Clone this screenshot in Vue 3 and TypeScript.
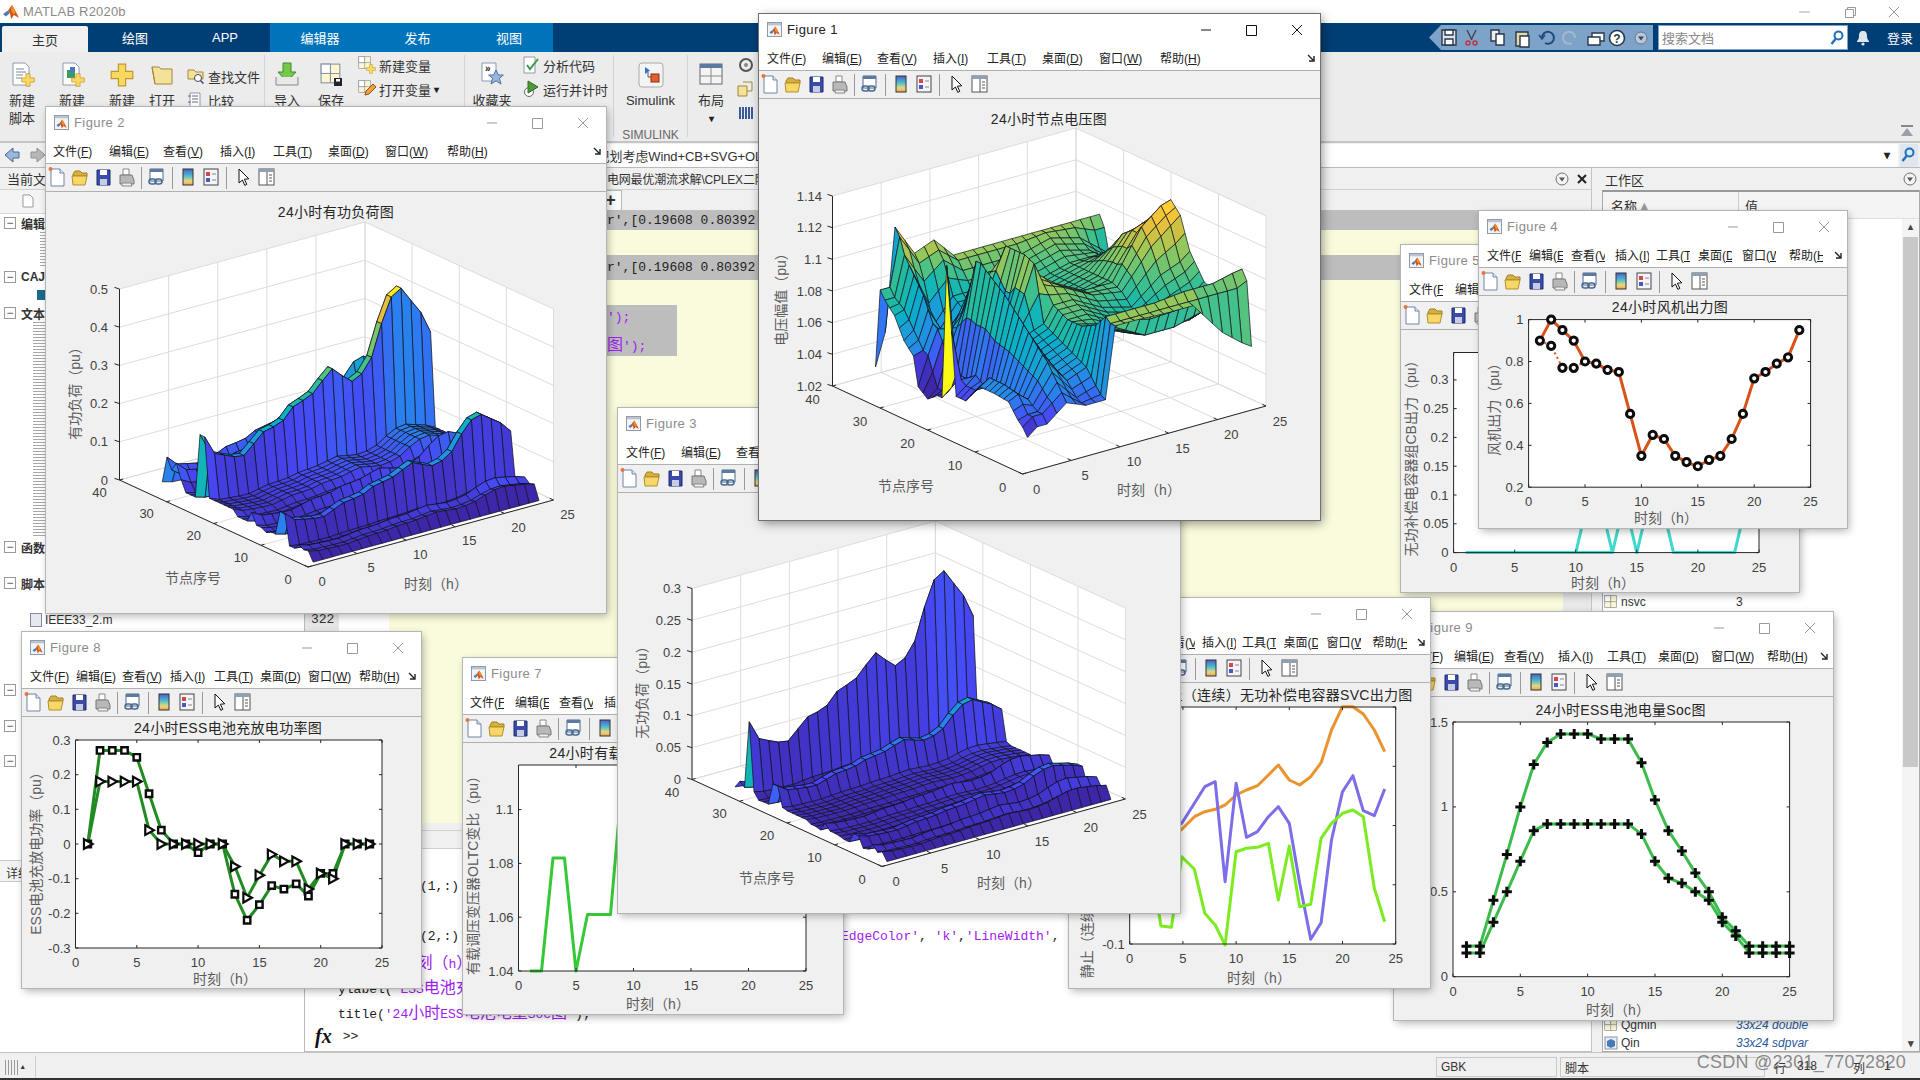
<script setup lang="ts">
type Pt = [number, number]
interface Txt { x: number; y: number; s: string; a: string; c: string; r?: boolean }
interface Shape { d: string; fill: string; stroke: string; w: number; dash?: string }
interface Layers { walls: Shape[]; grid: Shape[]; cells: Shape[]; lines: Shape[]; marks: Shape[]; texts: Txt[] }

const PAR: [number, number, number][] = [
  [62, 38, 168], [71, 72, 245], [44, 125, 240], [28, 155, 218], [8, 176, 200], [32, 186, 162],
  [90, 196, 124], [160, 200, 84], [222, 190, 62], [252, 200, 56], [249, 251, 21]
]
function parula(v: number): string {
  const u = Math.max(0, Math.min(0.9999, v)) * 10
  const i = Math.floor(u)
  const f = u - i
  const a = PAR[i]
  const b = PAR[i + 1]
  return `rgb(${Math.round(a[0] + (b[0] - a[0]) * f)},${Math.round(a[1] + (b[1] - a[1]) * f)},${Math.round(a[2] + (b[2] - a[2]) * f)})`
}
const pts = (p: Pt[]): string => p.map(q => `${q[0].toFixed(1)},${q[1].toFixed(1)}`).join(' ')
const ln = (p: Pt[], stroke: string, w: number, dash?: string): Shape => ({ d: pts(p), fill: 'none', stroke, w, dash })

interface Cfg3D {
  o: Pt; t: Pt; n: Pt; h: number; zlo: number; zhi: number; zt: number[]; zl: string[]; zx: number
  nOff: Pt; tOff: Pt; cmin: number; cmax: number; title: Pt; titleS: string; nl: Pt; tl: Pt; yl: Pt; ylS: string
  z: (n: number, t: number) => number
  colorV?: (n: number, t: number) => number
}
function build3D(c: Cfg3D): Layers {
  const P = (t: number, n: number, z: number): Pt => {
    const f = (z - c.zlo) / (c.zhi - c.zlo)
    return [
      c.o[0] + (t / 25) * (c.t[0] - c.o[0]) + (n / 40) * (c.n[0] - c.o[0]),
      c.o[1] + (t / 25) * (c.t[1] - c.o[1]) + (n / 40) * (c.n[1] - c.o[1]) - f * c.h
    ]
  }
  const white = (p: Pt[]): Shape => ({ d: pts(p), fill: '#fff', stroke: 'none', w: 0 })
  const { zlo: lo, zhi: hi } = c
  const walls = [
    white([P(0, 0, lo), P(25, 0, lo), P(25, 40, lo), P(0, 40, lo)]),
    white([P(0, 40, lo), P(25, 40, lo), P(25, 40, hi), P(0, 40, hi)]),
    white([P(25, 0, lo), P(25, 40, lo), P(25, 40, hi), P(25, 0, hi)])
  ]
  const G = '#dcdcdc'
  const grid: Shape[] = []
  const lines: Shape[] = []
  const texts: Txt[] = []
  const A = '#262626'
  for (const t of [0, 5, 10, 15, 20, 25]) {
    grid.push(ln([P(t, 0, lo), P(t, 40, lo), P(t, 40, hi)], G, 1))
    const a = P(t, 0, lo)
    lines.push(ln([a, [a[0] - 3.6, a[1] - 1.7]], A, 1))
    texts.push({ x: a[0] + c.tOff[0], y: a[1] + c.tOff[1], s: String(t), a: 'middle', c: 'tick' })
  }
  for (const n of [0, 10, 20, 30, 40]) {
    grid.push(ln([P(0, n, lo), P(25, n, lo), P(25, n, hi)], G, 1))
    const a = P(0, n, lo)
    lines.push(ln([a, [a[0] + 3.6, a[1] - 1]], A, 1))
    texts.push({ x: a[0] + c.nOff[0], y: a[1] + c.nOff[1], s: String(n), a: 'middle', c: 'tick' })
  }
  c.zt.forEach((z, i) => {
    grid.push(ln([P(0, 40, z), P(25, 40, z), P(25, 0, z)], G, 1))
    const a = P(0, 40, z)
    lines.push(ln([a, [a[0] - 5, a[1] - 1.6]], A, 1))
    texts.push({ x: c.zx, y: a[1], s: c.zl[i], a: 'end', c: 'tick' })
  })
  lines.push(ln([P(0, 40, hi), P(0, 40, lo), P(0, 0, lo), P(25, 0, lo)], A, 1))
  const cells: Shape[] = []
  for (let n = 32; n >= 1; n--) {
    for (let t = 23; t >= 1; t--) {
      const p = [P(t, n, c.z(n, t)), P(t + 1, n, c.z(n, t + 1)), P(t + 1, n + 1, c.z(n + 1, t + 1)), P(t, n + 1, c.z(n + 1, t))]
      const v = c.colorV ? c.colorV(n, t) : (c.z(n, t) - c.cmin) / (c.cmax - c.cmin)
      cells.push({ d: pts(p), fill: parula(v), stroke: '#10101a', w: 0.7 })
    }
  }
  texts.push({ x: c.title[0], y: c.title[1], s: c.titleS, a: 'middle', c: 'ttl' })
  texts.push({ x: c.nl[0], y: c.nl[1], s: '节点序号', a: 'middle', c: 'lab' })
  texts.push({ x: c.tl[0], y: c.tl[1], s: '时刻（h）', a: 'middle', c: 'lab' })
  texts.push({ x: c.yl[0], y: c.yl[1], s: c.ylS, a: 'middle', c: 'lab', r: true })
  return { walls, grid, cells, lines, marks: [], texts }
}

interface Cfg2D {
  x0: number; x1: number; y0: number; y1: number; ymin: number; ymax: number; yt: number[]; yl: string[]
  title: Pt; titleS: string; xl: Pt; yL: Pt; ylS: string; series: Shape[]; marks: Shape[]
}
function build2D(c: Cfg2D): Layers {
  const A = '#262626'
  const lines: Shape[] = [ln([[c.x0, c.y1], [c.x1, c.y1], [c.x1, c.y0], [c.x0, c.y0], [c.x0, c.y1]], A, 1)]
  const texts: Txt[] = []
  for (const t of [0, 5, 10, 15, 20, 25]) {
    const x = c.x0 + (t / 25) * (c.x1 - c.x0)
    lines.push(ln([[x, c.y0], [x, c.y0 - 3]], A, 1), ln([[x, c.y1], [x, c.y1 + 3]], A, 1))
    texts.push({ x, y: c.y0 + 14.5, s: String(t), a: 'middle', c: 'tick' })
  }
  c.yt.forEach((v, i) => {
    const y = c.y0 - ((v - c.ymin) / (c.ymax - c.ymin)) * (c.y0 - c.y1)
    lines.push(ln([[c.x0, y], [c.x0 + 3, y]], A, 1), ln([[c.x1, y], [c.x1 - 3, y]], A, 1))
    texts.push({ x: c.x0 - 5, y, s: c.yl[i], a: 'end', c: 'tick' })
  })
  texts.push({ x: c.title[0], y: c.title[1], s: c.titleS, a: 'middle', c: 'ttl' })
  texts.push({ x: c.xl[0], y: c.xl[1], s: '时刻（h）', a: 'middle', c: 'lab' })
  texts.push({ x: c.yL[0], y: c.yL[1], s: c.ylS, a: 'middle', c: 'lab', r: true })
  const walls: Shape[] = [{ d: pts([[c.x0, c.y1], [c.x1, c.y1], [c.x1, c.y0], [c.x0, c.y0]]), fill: '#fff', stroke: 'none', w: 0 }]
  return { walls, grid: [], cells: [], lines: [...c.series, ...lines], marks: c.marks, texts }
}

const Pload = [0, 50, 45, 60, 30, 30, 200, 200, 60, 60, 45, 60, 60, 120, 60, 60, 60, 90, 90, 90, 90, 90, 90, 420, 420, 60, 60, 60, 120, 200, 150, 210, 60]
const Qload = [0, 60, 40, 80, 30, 20, 100, 100, 20, 20, 30, 35, 35, 80, 10, 20, 20, 40, 40, 40, 40, 40, 50, 200, 200, 25, 25, 20, 70, 600, 70, 100, 40]
const Gt = [0.197, 0.147, 0.135, 0.124, 0.12, 0.144, 0.168, 0.174, 0.184, 0.212, 0.222, 0.233, 0.26, 0.284, 0.259, 0.237, 0.25, 0.286, 0.367, 0.43, 0.446, 0.407, 0.369, 0.31]

const VN = [1, 2, 3, 5, 8, 11, 14, 16, 18, 19, 20, 22, 24, 25, 27, 29, 31, 32, 33]
const VT = [1, 2, 3, 5, 7, 9, 10, 12, 15, 18, 21, 23, 24]
const VZ: number[][] = [
  [1.04, 1.045, 1.048, 1.057, 1.058, 1.058, 1.045, 1.045, 1.125, 1.04, 1.04, 1.035, 1.04, 1.058, 1.065, 1.078, 1.085, 1.09, 1.04],
  [1.045, 1.05, 1.05, 1.06, 1.062, 1.062, 1.05, 1.05, 1.055, 1.045, 1.04, 1.04, 1.058, 1.06, 1.07, 1.08, 1.085, 1.09, 1.06],
  [1.045, 1.05, 1.05, 1.055, 1.055, 1.055, 1.05, 1.055, 1.05, 1.05, 1.05, 1.06, 1.073, 1.075, 1.09, 1.1, 1.11, 1.12, 1.125],
  [1.055, 1.06, 1.065, 1.075, 1.085, 1.095, 1.105, 1.11, 1.115, 1.118, 1.118, 1.09, 1.07, 1.06, 1.06, 1.065, 1.09, 1.1, 1.105],
  [1.05, 1.05, 1.052, 1.06, 1.065, 1.07, 1.075, 1.08, 1.08, 1.07, 1.07, 1.09, 1.1, 1.095, 1.075, 1.08, 1.1, 1.105, 1.11],
  [1.05, 1.052, 1.056, 1.065, 1.07, 1.075, 1.08, 1.115, 1.118, 1.118, 1.118, 1.118, 1.1, 1.08, 1.075, 1.08, 1.09, 1.095, 1.097],
  [1.095, 1.095, 1.098, 1.09, 1.085, 1.085, 1.09, 1.1, 1.105, 1.1, 1.1, 1.1, 1.09, 1.08, 1.075, 1.08, 1.09, 1.095, 1.097],
  [1.095, 1.095, 1.098, 1.085, 1.08, 1.085, 1.09, 1.095, 1.095, 1.09, 1.09, 1.09, 1.085, 1.08, 1.078, 1.082, 1.09, 1.095, 1.097],
  [1.094, 1.095, 1.098, 1.075, 1.072, 1.075, 1.08, 1.085, 1.085, 1.08, 1.08, 1.08, 1.08, 1.08, 1.08, 1.085, 1.09, 1.095, 1.097],
  [1.094, 1.095, 1.1, 1.075, 1.07, 1.07, 1.075, 1.082, 1.085, 1.085, 1.085, 1.085, 1.085, 1.085, 1.085, 1.09, 1.095, 1.097, 1.097],
  [1.072, 1.095, 1.1, 1.08, 1.07, 1.075, 1.09, 1.105, 1.115, 1.11, 1.11, 1.105, 1.095, 1.09, 1.085, 1.085, 1.09, 1.095, 1.097],
  [1.062, 1.095, 1.103, 1.085, 1.075, 1.08, 1.095, 1.115, 1.125, 1.12, 1.115, 1.105, 1.095, 1.085, 1.075, 1.075, 1.08, 1.09, 1.097],
  [1.058, 1.098, 1.104, 1.09, 1.08, 1.085, 1.1, 1.12, 1.127, 1.12, 1.11, 1.1, 1.09, 1.08, 1.07, 1.07, 1.075, 1.09, 1.097]
]
function seg(a: number[], v: number): [number, number] {
  let i = 0
  while (i < a.length - 2 && a[i + 1] <= v) i++
  return [i, (v - a[i]) / (a[i + 1] - a[i])]
}
function vz(n: number, t: number): number {
  const [i, fi] = seg(VT, t)
  const [j, fj] = seg(VN, n)
  const a = VZ[i][j] + (VZ[i][j + 1] - VZ[i][j]) * fj
  const b = VZ[i + 1][j] + (VZ[i + 1][j + 1] - VZ[i + 1][j]) * fj
  return a + (b - a) * fi
}
function vColor(n: number, t: number): number {
  if (n === 18 && t === 1) return 1
  const c = [vz(n, t), vz(n + 1, t), vz(n, t + 1), vz(n + 1, t + 1)]
  if (t >= 19 && n <= 2) return (Math.max(...c) - 1.02) / 0.11 - 0.12
  const x = 0.75 * Math.min(...c) + 0.25 * vz(n, t)
  return t >= 9 ? (x - 1.02) / 0.11 : (x - 1.035) / 0.095
}

const plot1 = build3D({
  o: [1022.5, 474], t: [1266, 406], n: [832.5, 386], h: 190, zlo: 1.02, zhi: 1.14,
  zt: [1.02, 1.04, 1.06, 1.08, 1.1, 1.12, 1.14], zl: ['1.02', '1.04', '1.06', '1.08', '1.1', '1.12', '1.14'], zx: 822,
  nOff: [-20, 13], tOff: [14, 15], cmin: 1.03, cmax: 1.126, title: [1049, 119], titleS: '24小时节点电压图',
  nl: [906, 486], tl: [1149, 490], yl: [781, 296], ylS: '电压幅值（pu）', z: vz, colorV: vColor
})
const plot2 = build3D({
  o: [308, 567], t: [553.5, 500], n: [119.5, 480], h: 191, zlo: 0, zhi: 0.5,
  zt: [0, 0.1, 0.2, 0.3, 0.4, 0.5], zl: ['0', '0.1', '0.2', '0.3', '0.4', '0.5'], zx: 108,
  nOff: [-20, 12], tOff: [14, 14], cmin: 0, cmax: 0.446, title: [336, 212], titleS: '24小时有功负荷图',
  nl: [193, 578], tl: [436, 584], yl: [75, 390], ylS: '有功负荷（pu）',
  z: (n, t) => (Pload[n - 1] / 1000) * 2.38 * Gt[t - 1]
})
const plot3 = build3D({
  o: [882, 866.5], t: [1125.4, 799], n: [692, 779.5], h: 191, zlo: 0, zhi: 0.3,
  zt: [0, 0.05, 0.1, 0.15, 0.2, 0.25, 0.3], zl: ['0', '0.05', '0.1', '0.15', '0.2', '0.25', '0.3'], zx: 681,
  nOff: [-20, 12.5], tOff: [14, 15], cmin: 0, cmax: 0.273, title: [900, 504], titleS: '24小时无功负荷图',
  nl: [767, 878], tl: [1009, 883], yl: [642, 689], ylS: '无功负荷（pu）',
  z: (n, t) => (Qload[n - 1] / 1000) * 1.02 * Gt[t - 1]
})

const mapper = (x0: number, x1: number, y0: number, y1: number, ymin: number, ymax: number) => (t: number, v: number): Pt => [
  x0 + (t / 25) * (x1 - x0),
  y0 - ((v - ymin) / (ymax - ymin)) * (y0 - y1)
]
const circle = (p: Pt): Shape => ({
  d: `M${p[0] - 3.6} ${p[1]}a3.6 3.6 0 1 0 7.2 0a3.6 3.6 0 1 0 -7.2 0Z`, fill: '#fff', stroke: '#0c0c0c', w: 3
})
const square = (p: Pt): Shape => ({
  d: `M${p[0] - 3.2} ${p[1] - 3.2}h6.4v6.4h-6.4Z`, fill: '#fff', stroke: '#0c0c0c', w: 2.4
})
const tri = (p: Pt): Shape => ({
  d: `M${p[0] - 3.8} ${p[1] - 4.8}L${p[0] + 4.8} ${p[1]}L${p[0] - 3.8} ${p[1] + 4.8}Z`, fill: '#fff', stroke: '#0c0c0c', w: 2.2
})
const plus = (p: Pt): Shape => ({
  d: `M${p[0] - 5} ${p[1]}h10M${p[0]} ${p[1] - 5}v10`, fill: 'none', stroke: '#0c0c0c', w: 3
})

const m4 = mapper(1528.6, 1810.6, 487.2, 319.6, 0.2, 1)
const w4a = [0.9, 1, 0.95, 0.9, 0.8, 0.79, 0.76, 0.75, 0.55, 0.35, 0.45, 0.43, 0.35, 0.32, 0.3, 0.33, 0.35, 0.43, 0.55, 0.72, 0.75, 0.79, 0.82, 0.95]
const w4b: Pt[] = [[1, 0.9], [2, 0.875], [3, 0.77], [4, 0.77], [5, 0.8]]
const plot4 = build2D({
  x0: 1528.6, x1: 1810.6, y0: 487.2, y1: 319.6, ymin: 0.2, ymax: 1, yt: [0.2, 0.4, 0.6, 0.8, 1], yl: ['0.2', '0.4', '0.6', '0.8', '1'],
  title: [1670, 307], titleS: '24小时风机出力图', xl: [1666, 518], yL: [1494, 406], ylS: '风机出力（pu）',
  series: [
    ln(w4b.map(p => m4(p[0], p[1])), '#d95319', 2, '2 3'),
    ln(w4a.map((v, i) => m4(i + 1, v)), '#d95319', 3)
  ],
  marks: [...w4a.map((v, i) => circle(m4(i + 1, v))), ...w4b.slice(1, 4).map(p => circle(m4(p[0], p[1])))]
})

const m5 = mapper(1453.6, 1759, 552.6, 352.5, 0, 0.3475)
const flat5: Pt[] = [[1, 0], [13, 0]]
const osc5: Pt[] = [[10, 0], [11, 0.09], [12, 0.09], [13, 0], [14, 0.09], [15, 0], [16, 0.09], [17, 0.09], [18, 0], [23, 0], [24, 0.09]]
const plot5 = build2D({
  x0: 1453.6, x1: 1759, y0: 552.6, y1: 352.5, ymin: 0, ymax: 0.3475, yt: [0, 0.05, 0.1, 0.15, 0.2, 0.25, 0.3], yl: ['0', '0.05', '0.1', '0.15', '0.2', '0.25', '0.3'],
  title: [1606, 340], titleS: '24小时无功补偿电容器组CB出力图', xl: [1603, 583], yL: [1411, 455], ylS: '无功补偿电容器组CB出力（pu）',
  series: [ln(flat5.map(p => m5(p[0], p[1])), '#40d8cc', 3), ln(osc5.map(p => m5(p[0], p[1])), '#40d8cc', 3)],
  marks: []
})

const z6 = (p: Pt): Pt => [1060 + p[0] / 1.823, 590 + p[1] / 3]
const xs6 = [165, 184, 203, 222, 245, 264, 283, 301, 321, 340, 360, 380, 398, 418, 437, 457, 476, 495, 515, 534, 553, 573, 592]
const or6 = [760, 750, 740, 718, 680, 665, 658, 645, 615, 600, 587, 555, 525, 570, 585, 560, 518, 420, 350, 350, 372, 420, 485]
const pu6 = [760, 740, 720, 700, 640, 590, 575, 875, 580, 742, 725, 680, 650, 700, 880, 1048, 998, 750, 605, 557, 662, 677, 597]
const gr6 = [800, 1008, 1012, 800, 838, 970, 1005, 1065, 785, 775, 772, 760, 930, 768, 950, 943, 745, 700, 670, 660, 680, 895, 995]
const plot6 = build2D({
  x0: 1129.7, x1: 1395.7, y0: 944, y1: 707, ymin: -0.1, ymax: 0.3, yt: [-0.1, 0, 0.1, 0.2, 0.3], yl: ['-0.1', '0', '0.1', '0.2', '0.3'],
  title: [1261, 695], titleS: '24小时静止（连续）无功补偿电容器SVC出力图', xl: [1259, 978], yL: [1087, 837], ylS: '静止（连续）无功补偿电容器SVC出力（pu）',
  series: [
    ln(xs6.map((x, i) => z6([x, or6[i]])), '#ea9430', 3),
    ln(xs6.map((x, i) => z6([x, pu6[i]])), '#7b6ee8', 3),
    ln(xs6.map((x, i) => z6([x, gr6[i]])), '#7cec20', 3)
  ],
  marks: []
})

const m7 = mapper(518.5, 806, 971, 765, 1.04, 1.1166)
const v7 = [1.04, 1.04, 1.082, 1.082, 1.04, 1.061, 1.061, 1.061, 1.11, 1.11, 1.1, 1.09, 1.08, 1.1, 1.1, 1.09]
const plot7 = build2D({
  x0: 518.5, x1: 806, y0: 971, y1: 765, ymin: 1.04, ymax: 1.1166, yt: [1.04, 1.06, 1.08, 1.1], yl: ['1.04', '1.06', '1.08', '1.1'],
  title: [662, 753], titleS: '24小时有载调压变压器OLTC变比图', xl: [658, 1004], yL: [473, 872], ylS: '有载调压变压器OLTC变比（pu）',
  series: [ln(v7.map((v, i) => m7(i + 1, v)), '#36c836', 3)],
  marks: []
})

const m8 = mapper(75.5, 382, 948, 740, -0.3, 0.3)
const s8a = [0, 0.27, 0.27, 0.27, 0.25, 0.145, 0.04, 0, 0, -0.025, 0, 0, -0.145, -0.22, -0.175, -0.12, -0.13, -0.115, -0.15, -0.085, -0.085, 0, 0, 0]
const s8b = [0, 0.18, 0.18, 0.18, 0.18, 0.04, 0, 0, 0, 0, 0, 0, -0.065, -0.155, -0.09, -0.03, -0.05, -0.05, -0.13, -0.085, -0.1, 0, 0, 0]
const plot8 = build2D({
  x0: 75.5, x1: 382, y0: 948, y1: 740, ymin: -0.3, ymax: 0.3, yt: [-0.3, -0.2, -0.1, 0, 0.1, 0.2, 0.3], yl: ['-0.3', '-0.2', '-0.1', '0', '0.1', '0.2', '0.3'],
  title: [228, 728], titleS: '24小时ESS电池充放电功率图', xl: [225, 979], yL: [36, 850], ylS: 'ESS电池充放电功率（pu）',
  series: [
    ln(s8a.map((v, i) => m8(i + 1, v)), '#228b22', 3),
    ln(s8b.map((v, i) => m8(i + 1, v)), '#228b22', 3)
  ],
  marks: [...s8a.map((v, i) => square(m8(i + 1, v))), ...s8b.map((v, i) => tri(m8(i + 1, v)))]
})

const m9 = mapper(1453, 1789.6, 976.7, 722, 0, 1.5)
const s9a = [0.18, 0.18, 0.45, 0.72, 1, 1.25, 1.38, 1.43, 1.43, 1.43, 1.4, 1.4, 1.4, 1.26, 1.04, 0.86, 0.74, 0.61, 0.5, 0.35, 0.27, 0.18, 0.18, 0.18, 0.18]
const s9b = [0.14, 0.14, 0.32, 0.5, 0.68, 0.86, 0.9, 0.9, 0.9, 0.9, 0.9, 0.9, 0.9, 0.84, 0.68, 0.58, 0.55, 0.5, 0.45, 0.32, 0.24, 0.14, 0.14, 0.14, 0.14]
const plot9 = build2D({
  x0: 1453, x1: 1789.6, y0: 976.7, y1: 722, ymin: 0, ymax: 1.5, yt: [0, 0.5, 1, 1.5], yl: ['0', '0.5', '1', '1.5'],
  title: [1620.6, 710], titleS: '24小时ESS电池电量Soc图', xl: [1618, 1010], yL: [1412, 850], ylS: 'ESS电池电量（pu）',
  series: [
    ln(s9a.map((v, i) => m9(i + 1, v)), '#3cbc4c', 3),
    ln(s9b.map((v, i) => m9(i + 1, v)), '#3cbc4c', 3)
  ],
  marks: [...s9a.map((v, i) => plus(m9(i + 1, v))), ...s9b.map((v, i) => plus(m9(i + 1, v)))]
})

const menuNames: [string, string][] = [['文件', 'F'], ['编辑', 'E'], ['查看', 'V'], ['插入', 'I'], ['工具', 'T'], ['桌面', 'D'], ['窗口', 'W'], ['帮助', 'H']]
interface Fig { id: number; x: number; y: number; w: number; h: number; z: number; active?: boolean; mw: number[]; pad: number; clip?: boolean; plot: Layers }
const figures: Fig[] = [
  { id: 5, x: 1401, y: 245, w: 398, h: 347, z: 1, mw: [46, 46, 46, 46, 46, 46, 46, 46], pad: 8, clip: true, plot: plot5 },
  { id: 7, x: 463, y: 658, w: 380, h: 356, z: 2, mw: [45, 44, 45, 44, 44, 44, 44, 44], pad: 7, clip: true, plot: plot7 },
  { id: 9, x: 1394, y: 612, w: 439, h: 408, z: 3, mw: [50, 50, 54, 49, 51, 53, 56, 50], pad: 10, plot: plot9 },
  { id: 6, x: 1069, y: 598, w: 361, h: 390, z: 4, mw: [41, 41, 41, 40, 41.5, 43, 46, 38], pad: 10, clip: true, plot: plot6 },
  { id: 8, x: 22, y: 632, w: 399, h: 356, z: 5, mw: [46, 46, 48, 44, 46, 48, 51, 44], pad: 8, plot: plot8 },
  { id: 2, x: 46, y: 107, w: 560, h: 506, z: 6, mw: [56, 54, 57, 53, 55, 57, 62, 50], pad: 7, plot: plot2 },
  { id: 4, x: 1479, y: 211, w: 368, h: 317, z: 7, mw: [42, 42, 44, 41, 42, 44, 47, 40], pad: 8, clip: true, plot: plot4 },
  { id: 3, x: 618, y: 408, w: 562, h: 505, z: 8, mw: [55, 55, 55, 55, 55, 55, 55, 55], pad: 8, plot: plot3 },
  { id: 1, x: 759, y: 14, w: 561, h: 506, z: 9, active: true, mw: [55, 55, 56, 54, 55, 57, 61, 50], pad: 8, plot: plot1 }
]

interface TreeRow { h: number; label?: string; box?: boolean; kind?: string }
const tree: TreeRow[] = [
  { h: 18, label: '编辑器', box: true },
  { h: 36, kind: 'stripe' },
  { h: 18, label: 'CAJ', box: true },
  { h: 18, kind: 'dot' },
  { h: 18, label: '文本', box: true },
  { h: 216, kind: 'stripe2' },
  { h: 18, label: '函数', box: true },
  { h: 18 },
  { h: 18, label: '脚本', box: true },
  { h: 19 },
  { h: 18, kind: 'file', label: 'IEEE33_2.m' },
  { h: 52 },
  { h: 18, label: 'A', box: true },
  { h: 18 },
  { h: 18, label: 'I', box: true },
  { h: 17 },
  { h: 18, label: 'I', box: true },
  { h: 90 }
]
const favText = [
  { t: '分析代码', c: '#3b9a4a' },
  { t: '运行并计时', c: '#4f9a3a' }
]
</script>

<template>
  <div class="app">
    <svg class="defs" width="0" height="0">
      <defs>
        <linearGradient id="cbg" x1="0" y1="0" x2="0" y2="1">
          <stop offset="0" stop-color="#4a5fd0" /><stop offset=".45" stop-color="#52c0c8" /><stop offset=".75" stop-color="#e8d880" /><stop offset="1" stop-color="#f0a050" />
        </linearGradient>
        <symbol id="ml" viewBox="0 0 16 16">
          <polygon points="0,10 5,6.5 7,9 3,12.5" fill="#4a7fb0" />
          <polygon points="5,6.5 9,1 13,8 16,14 11,11 8,15 7,9" fill="#d4521c" />
          <polygon points="9,1 13,8 10.5,10.5 8,6" fill="#f09028" />
        </symbol>
        <symbol id="mlbox" viewBox="0 0 16 16">
          <rect x=".5" y=".5" width="15" height="15" fill="#f2f4f8" stroke="#8a94a4" />
          <rect x="1" y="1" width="14" height="2.5" fill="#b8c4d4" />
          <g transform="translate(2.5 4) scale(.7)"><use href="#ml" width="16" height="16" /></g>
        </symbol>
        <symbol id="tb" viewBox="0 0 240 27">
          <path d="M5 5h9l4 4v13H5z" fill="#fff" stroke="#6f86a8" /><path d="M14 5v4h4" fill="#dfe8f4" stroke="#6f86a8" /><circle cx="4.5" cy="5" r="2" fill="#e8743c" />
          <path d="M27 10l2-3h5l2 2h5v3h-14z" fill="#d8b040" stroke="#a08020" /><path d="M26 12h15l-2 9H27z" fill="#f6d768" stroke="#b09030" />
          <path d="M51 6h13v15H51z" fill="#3a4ca8" stroke="#1d2a70" /><path d="M54 6h7v5h-7z" fill="#fff" /><path d="M54 15h7v6h-7z" fill="#c8cce0" />
          <path d="M77 5h6v6h-6z" fill="#fff" stroke="#888" /><path d="M74 11h12l2 5v4H74z" fill="#b8b8b8" stroke="#777" /><path d="M76 19h9l1 3H76z" fill="#eee" stroke="#888" />
          <path d="M95.5 3v22M126.5 3v22M180.5 3v22" stroke="#9a9a9a" />
          <path d="M104 5h13v12h-13z" fill="#fff" stroke="#4a6a90" /><path d="M104 5h13v3h-13z" fill="#5a7aa0" />
          <rect x="103" y="15" width="7" height="5" rx="2.5" fill="none" stroke="#4a6a90" stroke-width="1.5" /><rect x="109" y="15" width="7" height="5" rx="2.5" fill="none" stroke="#4a6a90" stroke-width="1.5" />
          <rect x="137" y="5" width="10" height="16" fill="url(#cbg)" stroke="#333" />
          <rect x="158" y="5" width="14" height="16" fill="#f4f4fa" stroke="#444" /><rect x="160" y="8" width="4" height="4" fill="#d04848" /><rect x="160" y="14" width="4" height="4" fill="#4858c0" /><path d="M166 10h4M166 16h4" stroke="#888" />
          <path d="M193 5l0 14l3.4-3l2.4 5.4l2-1l-2.4-5.2l4.4-.4z" fill="#fff" stroke="#111" />
          <rect x="213" y="5" width="15" height="16" fill="#fff" stroke="#555" /><rect x="213" y="5" width="15" height="3" fill="#8fa0b4" /><path d="M221 8v13M223 11h3M223 14h3M223 17h3" stroke="#555" />
        </symbol>
        <symbol id="yplus" viewBox="0 0 20 20">
          <path d="M7 1h6v6h6v6h-6v6H7v-6H1V7h6z" fill="#f8d860" stroke="#c09a28" />
        </symbol>
        <symbol id="grid4" viewBox="0 0 20 20">
          <rect x="1" y="1" width="17" height="17" fill="#fdf6d0" stroke="#8a94a4" /><path d="M9.500 1v17M1 9.500h17" stroke="#8a94a4" /><rect x="1" y="1" width="8.5" height="8.5" fill="#fff" stroke="#8a94a4" />
        </symbol>
      </defs>
    </svg>

    <header class="caption">
      <svg class="capl" width="16" height="16"><use href="#ml" width="16" height="16" /></svg>
      <span class="capt">MATLAB R2020b</span>
      <div class="capbtns">
        <svg width="45" height="20" viewBox="0 0 45 20"><path d="M17 10h11" stroke="#aaa" /></svg>
        <svg width="45" height="20" viewBox="0 0 45 20"><path d="M18.500 7.500h8v8h-8zM20.500 7.500v-2h8v8h-2" fill="none" stroke="#999" /></svg>
        <svg width="45" height="20" viewBox="0 0 45 20"><path d="M17 5l10 10M27 5l-10 10" stroke="#999" /></svg>
      </div>
    </header>

    <nav class="tabstrip">
      <div class="tab home">主页</div>
      <div class="tab dark w90">绘图</div>
      <div class="tab dark w90">APP</div>
      <div class="ctx">
        <div class="tab c1">编辑器</div>
        <div class="tab c2">发布</div>
        <div class="tab c3">视图</div>
      </div>
      <div class="qa">
        <svg class="qas" viewBox="0 0 224 25" width="224" height="25">
          <path d="M12 0h212v25H12L0 12.500z" fill="#7ea3c8" />
          <g fill="none" stroke="#27384c" stroke-width="1.4">
            <path d="M13 5h14v15H13z" fill="#dde4ec" /><path d="M16 5h8v5h-8zM16 14h8v6h-8z" fill="#fff" />
            <path d="M38 5l5 10M47 5l-5 10" stroke="#444" /><circle cx="39" cy="18" r="2" stroke="#c03040" /><circle cx="46" cy="18" r="2" stroke="#c03040" />
            <path d="M62 5h8v11h-8z" fill="#eee" /><path d="M67 9h8v11h-8z" fill="#fff" />
            <path d="M87 7h12v14H87z" fill="#e4d8a8" /><path d="M91 11h9v11h-9z" fill="#fff" />
            <path d="M113 13a6 6 0 1 1 3 5" stroke="#1c4a80" stroke-width="2" /><path d="M110 10l3 4l3-4" stroke="#1c4a80" />
            <path d="M146 13a6 6 0 1 0-3 5" stroke="#a8b8c8" stroke-width="2" />
            <path d="M163 8h12v8h-12z" fill="#fff" /><path d="M159 12h12v8h-12z" fill="#fff" />
          </g>
          <circle cx="188" cy="13" r="7.5" fill="#fff" stroke="#27384c" stroke-width="1.6" />
          <text x="188" y="17.5" class="help">?</text>
          <circle cx="212" cy="13" r="6" fill="#b8c8d8" stroke="#607890" />
          <path d="M209 11.500h6l-3 4z" fill="#384858" />
        </svg>
        <div class="search">
          <span>搜索文档</span>
          <svg width="14" height="16" viewBox="0 0 14 16"><circle cx="8.5" cy="5.5" r="4" fill="none" stroke="#1c70b8" stroke-width="2" /><path d="M5.500 9l-4 5" stroke="#1c70b8" stroke-width="2.4" /></svg>
        </div>
        <svg class="bell" width="14" height="16" viewBox="0 0 14 16"><path d="M7 1c-3 0-4 2-4 5c0 3-1 4-2 5v1h12v-1c-1-1-2-2-2-5c0-3-1-5-4-5z" fill="#dfe6ee" /><circle cx="7" cy="14" r="1.6" fill="#dfe6ee" /></svg>
        <span class="login">登录</span>
      </div>
    </nav>

    <section class="ribbon">
      <div class="rg g1">
        <div class="big w44"><svg class="ri" viewBox="0 0 26 26"><path d="M4 1h12l4 4v18H4z" fill="#fff" stroke="#8a9bb0" /><path d="M7 7h8M7 10h10M7 13h7M7 16h6" stroke="#7a8a9a" /><use href="#yplus" x="12" y="11" width="14" height="14" /></svg><span>新建</span><span>脚本</span></div>
        <div class="big w56"><svg class="ri" viewBox="0 0 26 26"><path d="M4 1h12l4 4v18H4z" fill="#fff" stroke="#8a9bb0" /><rect x="8" y="8" width="8" height="8" fill="#3a9a6a" /><rect x="11" y="5" width="5" height="5" fill="#4878c8" /><use href="#yplus" x="12" y="11" width="14" height="14" /></svg><span>新建</span></div>
        <div class="big w44"><svg class="ri" viewBox="0 0 26 26"><use href="#yplus" x="1" y="1" width="24" height="24" /></svg><span>新建</span></div>
        <div class="big w36"><svg class="ri" viewBox="0 0 26 26"><path d="M3 5h7l2 2h11v15H6z" fill="#f4e29a" stroke="#a08838" /><path d="M3 5l3 17" stroke="#a08838" /></svg><span>打开</span></div>
        <div class="lst l1">
          <div class="it"><svg class="si" viewBox="0 0 18 18"><path d="M1 3h6l2 2h7v7H1z" fill="#f4e29a" stroke="#a08838" /><circle cx="11" cy="11" r="3.5" fill="#fff" stroke="#446" /><path d="M13.500 13.500l3 3" stroke="#446" stroke-width="1.5" /></svg>查找文件</div>
          <div class="it"><svg class="si" viewBox="0 0 18 18"><path d="M3 2h10v14H3z" fill="#fff" stroke="#8a9bb0" /><path d="M5 5h6M5 8h6M5 11h6M1 5h3M1 11h3" stroke="#667" /></svg>比较</div>
        </div>
      </div>
      <div class="rg g2">
        <div class="big w44"><svg class="ri" viewBox="0 0 26 26"><path d="M9 1h8v9h5l-9 10l-9-10h5z" fill="#76c848" stroke="#3c8c28" /><path d="M2 15v8h22v-8" fill="#e8e8e8" stroke="#888" /></svg><span>导入</span></div>
        <div class="big w44"><svg class="ri" viewBox="0 0 26 26"><use href="#grid4" x="2" y="1" width="22" height="22" /><rect x="16" y="16" width="8" height="8" fill="#223" /><rect x="18" y="17" width="4" height="2.5" fill="#fff" /></svg><span>保存</span></div>
        <div class="lst l2">
          <div class="it"><svg class="si" viewBox="0 0 18 18"><use href="#grid4" x="0" y="0" width="14" height="14" /><use href="#yplus" x="8" y="8" width="10" height="10" /></svg>新建变量</div>
          <div class="it"><svg class="si" viewBox="0 0 18 18"><use href="#grid4" x="0" y="0" width="14" height="14" /><path d="M7 15l1-4l7-7l3 3l-7 7z" fill="#f0a040" stroke="#905018" /></svg>打开变量 <b class="tri">▾</b></div>
          <div class="it"></div>
        </div>
      </div>
      <div class="rg g3">
        <div class="big w54"><svg class="ri" viewBox="0 0 26 26"><path d="M3 1h14v18H3z" fill="#fff" stroke="#8a9bb0" /><text x="6" y="10" class="fav">»</text><path d="M17 8l2.400 5h5l-4 3.400l1.600 5.600l-5-3.200l-5 3.200l1.600-5.600l-4-3.400h5z" fill="#9ab4dc" stroke="#5070a0" /></svg><span>收藏夹</span></div>
        <div class="lst l3">
          <div class="it"><svg class="si" viewBox="0 0 18 18"><path d="M2 1h11v16H2z" fill="#fff" stroke="#8a9bb0" /><path d="M5 9l3 4l8-10" fill="none" :stroke="favText[0].c" stroke-width="2" /></svg>分析代码</div>
          <div class="it"><svg class="si" viewBox="0 0 18 18"><circle cx="7" cy="12" r="4.5" fill="#fff" stroke="#667" /><path d="M6 1l10 6l-10 6z" :fill="favText[1].c" stroke="#2c6a20" /></svg>运行并计时</div>
          <div class="it"></div>
        </div>
      </div>
      <div class="rg g4">
        <div class="big w74"><svg class="ri rsim" viewBox="0 0 26 26"><rect x="1" y="1" width="24" height="24" rx="3" fill="#f4f4f4" stroke="#aaa" /><path d="M7 5l5 3.500l-5 3.500z" fill="#2a78c8" /><path d="M10 10v5h3" fill="none" stroke="#555" /><rect x="13" y="12" width="8" height="8" fill="#e06030" stroke="#8a3010" /></svg><span class="simt">Simulink</span></div>
        <div class="gl">SIMULINK</div>
      </div>
      <div class="rg g5">
        <div class="big w46"><svg class="ri" viewBox="0 0 26 26"><rect x="2" y="2" width="22" height="20" fill="#f4f4f4" stroke="#667" /><rect x="2" y="2" width="22" height="4" fill="#5a7aa0" /><path d="M13 6v16M2 14h22" stroke="#888" /></svg><span>布局</span><b class="tri2">▾</b></div>
        <div class="lst l4">
          <div class="it"><svg class="si" viewBox="0 0 18 18"><circle cx="9" cy="9" r="6" fill="none" stroke="#555" stroke-width="2" /><circle cx="9" cy="9" r="2" fill="#888" /></svg></div>
          <div class="it"><svg class="si" viewBox="0 0 18 18"><path d="M1 6h9v10H1z" fill="#f4e29a" stroke="#a08838" /><path d="M6 2h9v9h-5" fill="none" stroke="#a08838" /></svg></div>
          <div class="it"><svg class="si" viewBox="0 0 18 18"><path d="M3 3v12M6 3v12M9 3v12M12 3v12M15 3v12" stroke="#3a5a98" stroke-width="2" /></svg></div>
        </div>
      </div>
      <svg class="collapse" width="14" height="12" viewBox="0 0 14 12"><path d="M1 1h12" stroke="#888" stroke-width="2" /><path d="M7 3l6 8H1z" fill="#9aa0a8" /></svg>
    </section>

    <div class="addr">
      <svg width="46" height="18" viewBox="0 0 46 18"><path d="M2 9l8-7v4h6v6h-6v4z" fill="#9ab8dc" stroke="#46688c" /><path d="M42 9l-8-7v4h-6v6h6v4z" fill="#b8b8b8" stroke="#909090" /></svg>
      <div class="path"><span class="ptext">D:\MATLAB\文件\配电网规划考虑Wind+CB+SVG+OLTC+ESS\规划考虑Wind+CB+SVG+OLTC</span><b class="pd">▾</b></div>
      <div class="psearch"><svg width="16" height="16" viewBox="0 0 14 16"><circle cx="8.5" cy="5.5" r="4" fill="none" stroke="#1c70b8" stroke-width="2" /><path d="M5.500 9l-4 5" stroke="#1c70b8" stroke-width="2.4" /></svg></div>
    </div>

    <main class="main">
      <aside class="left">
        <div class="phead"><span>当前文件夹</span></div>
        <div class="fhead"><svg width="12" height="14" viewBox="0 0 12 14"><path d="M1 1h7l3 3v9H1z" fill="#fff" stroke="#999" /></svg></div>
        <div v-for="(r, i) in tree" :key="i" class="trow" :style="{ height: r.h + 'px' }">
          <template v-if="r.box"><i class="box">−</i><b>{{ r.label }}</b></template>
          <template v-else-if="r.kind === 'file'"><i class="fic"></i><span>{{ r.label }}</span></template>
          <i v-else-if="r.kind === 'stripe' || r.kind === 'stripe2'" class="stripes" :class="r.kind"></i>
          <i v-else-if="r.kind === 'dot'" class="dot"></i>
        </div>
        <div class="detail"><span class="dtab">详细</span></div>
      </aside>

      <section class="center">
        <div class="phead right"><span class="crumb">电网最优潮流求解\CPLEX二阶锥规划</span><svg width="16" height="16" viewBox="0 0 16 16"><circle cx="8" cy="8" r="6" fill="#f4f4f4" stroke="#707070" /><path d="M5 6.500h6l-3 4z" fill="#555" /></svg><svg width="14" height="14" viewBox="0 0 14 14"><path d="M3 3l8 8M11 3l-8 8" stroke="#222" stroke-width="2" /></svg></div>
        <div class="etabs"><span class="plus">+</span></div>
        <div class="editor">
          <div class="gutter"><i></i><i class="w"><span class="ln322">322</span></i></div>
          <div class="code">
            <div class="cr gray h19"><span>r',[0.19608 0.80392 0.19608],'LineWidth',2)</span></div>
            <div class="cr h25"></div>
            <div class="cr gray h25"><span>r',[0.19608 0.80392 0.19608],'LineWidth',2)</span></div>
            <div class="cr h25"></div>
            <div class="cr gray h24 short"><span class="pur">');</span></div>
            <div class="cr gray h27 short"><span class="pur"><i class="cjk">图</i>');</span></div>
          </div>
          <div class="vbar"></div>
        </div>
        <div class="chead"><div class="chead2"></div></div>
        <div class="cmd">
          <div class="line"></div>
          <div class="line p82">(1,:)',</div>
          <div class="line"></div>
          <div class="line p82 two"><span>(2,:)',</span><span class="far"><span class="pur">EdgeColor'</span>, <span class="pur">'k'</span>,<span class="pur">'LineWidth'</span>,</span></div>
          <div class="line p0">xlabel(<span class="pur">'<i class="cjk">时刻（</i>h<i class="cjk">）</i>'</span>);</div>
          <div class="line p0">ylabel(<span class="pur">'ESS<i class="cjk">电池充放电功率</i>'</span>);</div>
          <div class="line p0">title(<span class="pur">'24<i class="cjk">小时</i>ESS<i class="cjk">电池电量</i>Soc<i class="cjk">图</i>'</span>);</div>
          <div class="line prompt"><i class="fx">fx</i><span>&gt;&gt;</span></div>
        </div>
      </section>

      <aside class="ws">
        <div class="whead"><span>工作区</span><svg width="16" height="16" viewBox="0 0 16 16"><circle cx="8" cy="8" r="6" fill="#f4f4f4" stroke="#707070" /><path d="M5 6.500h6l-3 4z" fill="#555" /></svg></div>
        <div class="wbody">
          <div class="wth"><span class="c-name">名称 <b class="up">▴</b></span><span class="c-val">值</span></div>
          <div class="wrap">
            <div class="wlist">
              <div class="wr"><svg class="var" viewBox="0 0 14 14"><use href="#grid4" width="14" height="14" /></svg><span class="wn">nsvc</span><span class="wv">3</span></div>
              <div class="wgap"></div>
              <div class="wr"><svg class="var" viewBox="0 0 14 14"><use href="#grid4" width="14" height="14" /></svg><span class="wn">Qgmin</span><span class="wv blue">33x24 double</span></div>
              <div class="wr"><svg class="var" viewBox="0 0 14 14"><rect x="1" y="1" width="12" height="12" fill="#e8eef8" stroke="#8a94a4" /><path d="M7 3l4 2v5l-4 2l-4-2V5z" fill="#4a78b8" /></svg><span class="wn">Qin</span><span class="wv blue">33x24 sdpvar</span></div>
            </div>
            <div class="wscroll"><b class="sup">▴</b><i class="thumb"></i><b class="sdn">▾</b></div>
          </div>
        </div>
      </aside>
    </main>

    <footer class="status">
      <div class="grip"><i></i><b>▴</b></div>
      <div class="sbox gbk">GBK</div>
      <div class="sbox scr">脚本</div>
      <div class="rowc"><span>行</span><span>318</span></div>
      <div class="colc"><span>列</span><span>1</span></div>
    </footer>
    <div class="taskbar"></div>

    <article
      v-for="f in figures" :key="f.id" class="fig" :class="{ active: f.active }"
      :style="{ left: f.x + 'px', top: f.y + 'px', width: f.w + 'px', height: f.h + 'px', zIndex: f.z }"
    >
      <div class="ft">
        <svg class="fl" width="15" height="15"><use href="#mlbox" width="15" height="15" /></svg>
        <span class="fname">Figure {{ f.id }}</span>
        <div class="fbtn">
          <svg width="45" height="16" viewBox="0 0 45 16"><path d="M18 8h10" /></svg>
          <svg width="46" height="16" viewBox="0 0 46 16"><path d="M18.500 3.500h10v10h-10z" /></svg>
          <svg width="46" height="16" viewBox="0 0 46 16"><path d="M18 3l10 10M28 3l-10 10" /></svg>
        </div>
      </div>
      <div class="fm" :style="{ paddingLeft: f.pad + 'px' }">
        <span v-for="(m, i) in menuNames" :key="i" class="mi" :style="{ width: f.mw[i] + 'px' }">
          <span class="mt" :class="{ clip: f.clip }">{{ m[0] }}(<u>{{ m[1] }}</u>)</span>
        </span>
        <svg class="mm" width="10" height="10" viewBox="0 0 10 10"><path d="M2 2l5 5M8 3v5H3" fill="none" stroke="#222" stroke-width="1.4" /></svg>
      </div>
      <div class="fb"><svg width="240" height="27" viewBox="0 0 240 27"><use href="#tb" width="240" height="27" /></svg></div>
      <svg class="plot" :viewBox="`${f.x} ${f.y + 85} ${f.w} ${f.h - 85}`">
        <polygon v-for="(p, i) in f.plot.walls" :key="'w' + i" :points="p.d" :fill="p.fill" />
        <polyline v-for="(p, i) in f.plot.grid" :key="'g' + i" :points="p.d" fill="none" :stroke="p.stroke" :stroke-width="p.w" />
        <polygon v-for="(p, i) in f.plot.cells" :key="'c' + i" :points="p.d" :fill="p.fill" :stroke="p.stroke" :stroke-width="p.w" stroke-linejoin="round" />
        <polyline v-for="(p, i) in f.plot.lines" :key="'l' + i" :points="p.d" fill="none" :stroke="p.stroke" :stroke-width="p.w" :stroke-dasharray="p.dash" stroke-linejoin="round" />
        <path v-for="(p, i) in f.plot.marks" :key="'m' + i" :d="p.d" :fill="p.fill" :stroke="p.stroke" :stroke-width="p.w" />
        <text
          v-for="(t, i) in f.plot.texts" :key="'t' + i" :x="t.x" :y="t.y" :class="t.c" :text-anchor="t.a"
          dominant-baseline="central" :transform="t.r ? `rotate(-90 ${t.x} ${t.y})` : undefined"
        >{{ t.s }}</text>
      </svg>
    </article>

    <div class="wm">CSDN @2301_77072820</div>
  </div>
</template>

<style>
html, body { margin: 0; padding: 0; overflow: hidden; background: #f0f0f0; }
</style>

<style scoped>
.app {
  position: relative; width: 1920px; height: 1080px; overflow: hidden; display: flex; flex-direction: column;
  font-family: "Liberation Sans", "Noto Sans CJK SC", sans-serif; font-size: 12px; color: #333; background: #f0f0f0;
}
.defs { position: absolute; }
.caption { height: 23px; background: #fff; display: flex; align-items: center; flex: none; }
.capl { margin-left: 3px; }
.capt { margin-left: 4px; font-size: 13px; color: #8a8a8a; letter-spacing: .2px; }
.capbtns { margin-left: auto; display: flex; margin-right: 3px; }
.tabstrip { height: 29px; background: #003e76; display: flex; flex: none; color: #fff; font-size: 13px; }
.tab { display: flex; align-items: center; justify-content: center; }
.home { width: 86px; margin: 3px 2px 0 2px; background: #f0f0f0; color: #333; border-radius: 2px 2px 0 0; }
.w90 { width: 90px; }
.ctx { display: flex; background: #0073bb; width: 283px; }
.c1 { width: 100px; } .c2 { width: 95px; } .c3 { width: 88px; }
.qa { margin-left: auto; display: flex; align-items: center; padding-right: 2px; }
.qas { display: block; }
.help { font-size: 12px; font-weight: 700; text-anchor: middle; fill: #27384c; }
.search { width: 190px; height: 25px; margin-left: 5px; background: #fff; border: 1px solid #7ea3c8; box-sizing: border-box; display: flex; align-items: center; justify-content: space-between; padding: 0 3px; color: #888; }
.bell { margin-left: 8px; }
.login { margin-left: 17px; margin-right: 5px; font-size: 13px; }
.ribbon { height: 91px; display: flex; flex: none; border-bottom: 2px solid #c4c4c4; box-sizing: border-box; position: relative; background: #ececec; }
.rg { display: flex; border-right: 1px solid #d4d4d4; box-sizing: border-box; height: 82px; margin-top: 3px; position: relative; }
.g1 { width: 265px; } .g2 { width: 200px; } .g3 { width: 149px; } .g4 { width: 74px; } .g5 { width: 300px; border: 0; }
.big { display: flex; flex-direction: column; align-items: center; padding-top: 7px; box-sizing: border-box; font-size: 13px; line-height: 18px; }
.w44 { width: 44px; } .w56 { width: 56px; } .w36 { width: 36px; } .w54 { width: 54px; } .w74 { width: 74px; } .w46 { width: 46px; }
.ri { width: 26px; height: 26px; margin-bottom: 4px; }
.simt { font-size: 13px; }
.gl { position: absolute; left: 0; right: 0; bottom: -5px; text-align: center; font-size: 12px; color: #666; }
.lst { display: flex; flex-direction: column; gap: 6px; padding-top: 1px; font-size: 13px; }
.l1 { margin-left: 7px; padding-top: 12px; } .l2 { margin-left: 5px; } .l3 { margin-left: 3px; } .l4 { margin-left: 3px; }
.it { display: flex; align-items: center; gap: 3px; height: 18px; white-space: nowrap; }
.si { width: 18px; height: 18px; }
.tri, .tri2 { font-size: 10px; color: #222; }
.fav { font-size: 10px; font-weight: 700; fill: #222; }
.collapse { position: absolute; right: 6px; bottom: 4px; }
.addr { height: 25px; display: flex; align-items: center; flex: none; background: #f0f0f0; border-bottom: 1px solid #bbb; box-sizing: border-box; padding-left: 3px; }
.path { flex: 1; height: 23px; background: #fff; display: flex; align-items: center; font-size: 13px; margin-left: 3px; min-width: 0; overflow: hidden; }
.ptext { margin-left: 188px; white-space: nowrap; flex: 1; letter-spacing: -.1px; }
.pd { margin-right: 8px; font-size: 12px; color: #222; }
.psearch { width: 18px; height: 23px; display: flex; align-items: center; background: #dfe6ee; border-radius: 2px; margin-right: 2px; margin-left: 2px; }
.main { flex: 1; display: flex; min-height: 0; background: #f0f0f0; }
.left { width: 305px; flex: none; background: #fff; display: flex; flex-direction: column; border-right: 1px solid #bbb; box-sizing: border-box; overflow: hidden; }
.phead { height: 22px; flex: none; background: #f0f0f0; display: flex; align-items: center; font-size: 13px; padding-left: 7px; border-bottom: 1px solid #d0d0d0; box-sizing: border-box; white-space: nowrap; }
.phead.right { justify-content: flex-end; gap: 5px; padding-right: 2px; }
.crumb { margin-right: auto; margin-left: 295px; font-size: 12px; letter-spacing: -.2px; }
.fhead { height: 24px; flex: none; background: #f4f4f4; border-bottom: 1px solid #d8d8d8; box-sizing: border-box; padding: 4px 0 0 22px; }
.trow { display: flex; align-items: center; font-size: 12px; padding-left: 4px; overflow: hidden; flex: none; }
.box { width: 10px; height: 10px; border: 1px solid #999; display: flex; align-items: center; justify-content: center; font-style: normal; margin-right: 5px; color: #555; line-height: 1; }
.fic { width: 12px; height: 14px; background: #e4e8f0; border: 1px solid #889; margin: 0 3px 0 26px; box-sizing: border-box; }
.stripes { display: block; margin-left: 36px; width: 7px; height: 100%; background: repeating-linear-gradient(#a8a8a8 0 1px, #fff 1px 3px); }
.stripe2 { margin-left: 29px; width: 14px; }
.dot { width: 9px; height: 10px; margin-left: 33px; background: #1a6a8a; }
.detail { height: 22px; flex: none; background: #f4f4f4; border-top: 1px solid #c8c8c8; border-bottom: 1px solid #c8c8c8; font-size: 12px; padding: 3px 0 0 6px; box-sizing: border-box; }
.center { flex: 1; display: flex; flex-direction: column; min-width: 0; border-right: 1px solid #c4c4c4; }
.etabs { height: 21px; flex: none; background: #f0f0f0; border-bottom: 1px solid #c0c0c0; box-sizing: border-box; padding-left: 294px; }
.plus { display: inline-block; width: 23px; height: 21px; background: #fafafa; border: 1px solid #bbb; box-sizing: border-box; text-align: center; font-size: 18px; line-height: 19px; font-weight: 700; }
.editor { flex: 1; min-height: 0; display: flex; }
.gutter { width: 84px; flex: none; display: flex; background: #fff; }
.gutter i { width: 34px; background: #e6e6e6; display: block; position: relative; }
.gutter i.w { width: 50px; background: #fff; }
.ln322 { position: absolute; left: -28px; top: 401px; font: 13px "Liberation Mono", monospace; color: #333; font-style: normal; }
.code { flex: 1; background: #fafadc; font: 13px "Liberation Mono", "Noto Sans CJK SC", monospace; color: #222; min-width: 0; overflow: hidden; }
.vbar { width: 28px; flex: none; background: #e8e8e8; }
.cr { padding-left: 218px; display: flex; align-items: center; white-space: nowrap; }
.gray { background: #bdbdbd; }
.short { width: 288px; box-sizing: border-box; }
.h19 { height: 19px; } .h25 { height: 25px; } .h24 { height: 24px; } .h27 { height: 27px; }
.pur { color: #a020f0; }
.cjk { font-style: normal; font-size: 16px; font-family: "Noto Sans CJK SC", sans-serif; }
.chead { height: 25px; flex: none; background: #f0f0f0; }
.chead2 { height: 7px; border-bottom: 1px solid #d0d0d0; }
.cmd { flex: none; height: 204px; background: #fff; font: 13px "Liberation Mono", "Noto Sans CJK SC", monospace; color: #222; border-top: 1px solid #d0d0d0; box-sizing: border-box; border-bottom: 1px solid #c0c0c0; }
.line { height: 25px; display: flex; align-items: center; white-space: pre; }
.p82 { padding-left: 115px; } .p0 { padding-left: 33px; display: block; line-height: 25px; }
.two { position: relative; }
.far { position: absolute; left: 536px; }
.prompt { padding-left: 10px; gap: 11px; }
.fx { font: italic 700 20px "Liberation Serif", serif; color: #111; }
.ws { width: 320px; flex: none; display: flex; flex-direction: column; background: #f0f0f0; margin-left: 8px; }
.whead { height: 22px; flex: none; display: flex; justify-content: space-between; align-items: center; font-size: 13px; padding: 0 2px 0 5px; box-sizing: border-box; }
.wbody { flex: 1; min-height: 0; display: flex; flex-direction: column; border: 1px solid #aaa; border-top: 2px solid #999; background: #fff; margin-left: 2px; }
.wth { height: 26px; flex: none; display: flex; align-items: center; background: #f4f4f4; border-bottom: 1px solid #ddd; font-size: 13px; }
.c-name { width: 136px; padding-left: 8px; box-sizing: border-box; border-right: 1px solid #ccc; height: 100%; display: flex; align-items: center; gap: 4px; }
.c-val { padding-left: 6px; font-weight: 400; }
.up { color: #999; }
.wrap { flex: 1; display: flex; min-height: 0; }
.wlist { flex: 1; padding-top: 374px; font-size: 12px; }
.wr { height: 18px; display: flex; align-items: center; padding-left: 1px; }
.var { width: 14px; height: 14px; margin-right: 3px; }
.wn { width: 115px; }
.wv.blue { color: #2a5a9a; font-style: italic; }
.wgap { height: 405px; }
.wscroll { width: 17px; flex: none; display: flex; flex-direction: column; align-items: center; background: #f4f4f4; color: #444; }
.thumb { width: 15px; height: 530px; background: #c8c8c8; display: block; flex: none; margin-top: 2px; }
.sup { font-size: 10px; line-height: 16px; }
.sdn { margin-top: auto; font-size: 11px; line-height: 16px; }
.status { height: 26px; flex: none; display: flex; align-items: center; background: #f0f0f0; border-top: 1px solid #c4c4c4; box-sizing: border-box; font-size: 12px; padding-top: 3px; }
.grip { width: 30px; height: 100%; display: flex; align-items: center; border-right: 1px solid #ccc; padding-left: 5px; gap: 2px; font-size: 7px; box-sizing: content-box; }
.grip i { display: block; width: 14px; height: 15px; background: repeating-linear-gradient(90deg, #999 0 1px, #f0f0f0 1px 3px); }
.sbox { height: 20px; display: flex; align-items: center; padding-left: 4px; border: 1px solid #c8c8c8; box-sizing: border-box; }
.gbk { margin-left: 1400px; width: 121px; }
.scr { margin-left: 3px; width: 205px; }
.rowc { margin-left: 9px; width: 79px; display: flex; gap: 11px; }
.colc { display: flex; gap: 19px; }
.taskbar { height: 2px; flex: none; background: #333; }

.fig { position: absolute; display: flex; flex-direction: column; background: #f0f0f0; box-shadow: 0 0 0 1px #b4b4b4, 2px 3px 8px rgba(0, 0, 0, .3); overflow: hidden; }
.fig.active { box-shadow: 0 0 0 1px #707070, 2px 3px 10px rgba(0, 0, 0, .45); }
.ft { height: 31px; flex: none; background: #fff; display: flex; align-items: center; padding-left: 8px; }
.fname { margin-left: 5px; font-size: 13px; color: #8c8c8c; letter-spacing: .4px; }
.active .fname { color: #222; }
.fbtn { margin-left: auto; display: flex; }
.fbtn path { fill: none; stroke: #999; stroke-width: 1; }
.active .fbtn path { stroke: #111; }
.fm { height: 25px; flex: none; background: #fff; display: flex; align-items: center; border-bottom: 1px solid #b0b0b0; position: relative; color: #222; white-space: nowrap; overflow: hidden; }
.mi { flex: none; display: block; overflow: hidden; }
.mt { display: block; overflow: hidden; }
.mt.clip { width: 34px; }
.mm { position: absolute; right: 4px; top: 8px; }
.fb { height: 27px; flex: none; background: #f0f0f0; border-bottom: 1px solid #b0b0b0; }
.fb svg { display: block; }
.plot { display: block; flex: 1; width: 100%; min-height: 0; }
.tick { font-size: 13px; fill: #404040; }
.lab { font-size: 14px; fill: #5c5c5c; }
.ttl { font-size: 14px; fill: #262626; letter-spacing: .3px; }
.wm { position: absolute; right: 14px; bottom: 7px; z-index: 20; font-size: 18px; letter-spacing: .25px; color: rgba(70, 70, 70, .62); }
</style>
